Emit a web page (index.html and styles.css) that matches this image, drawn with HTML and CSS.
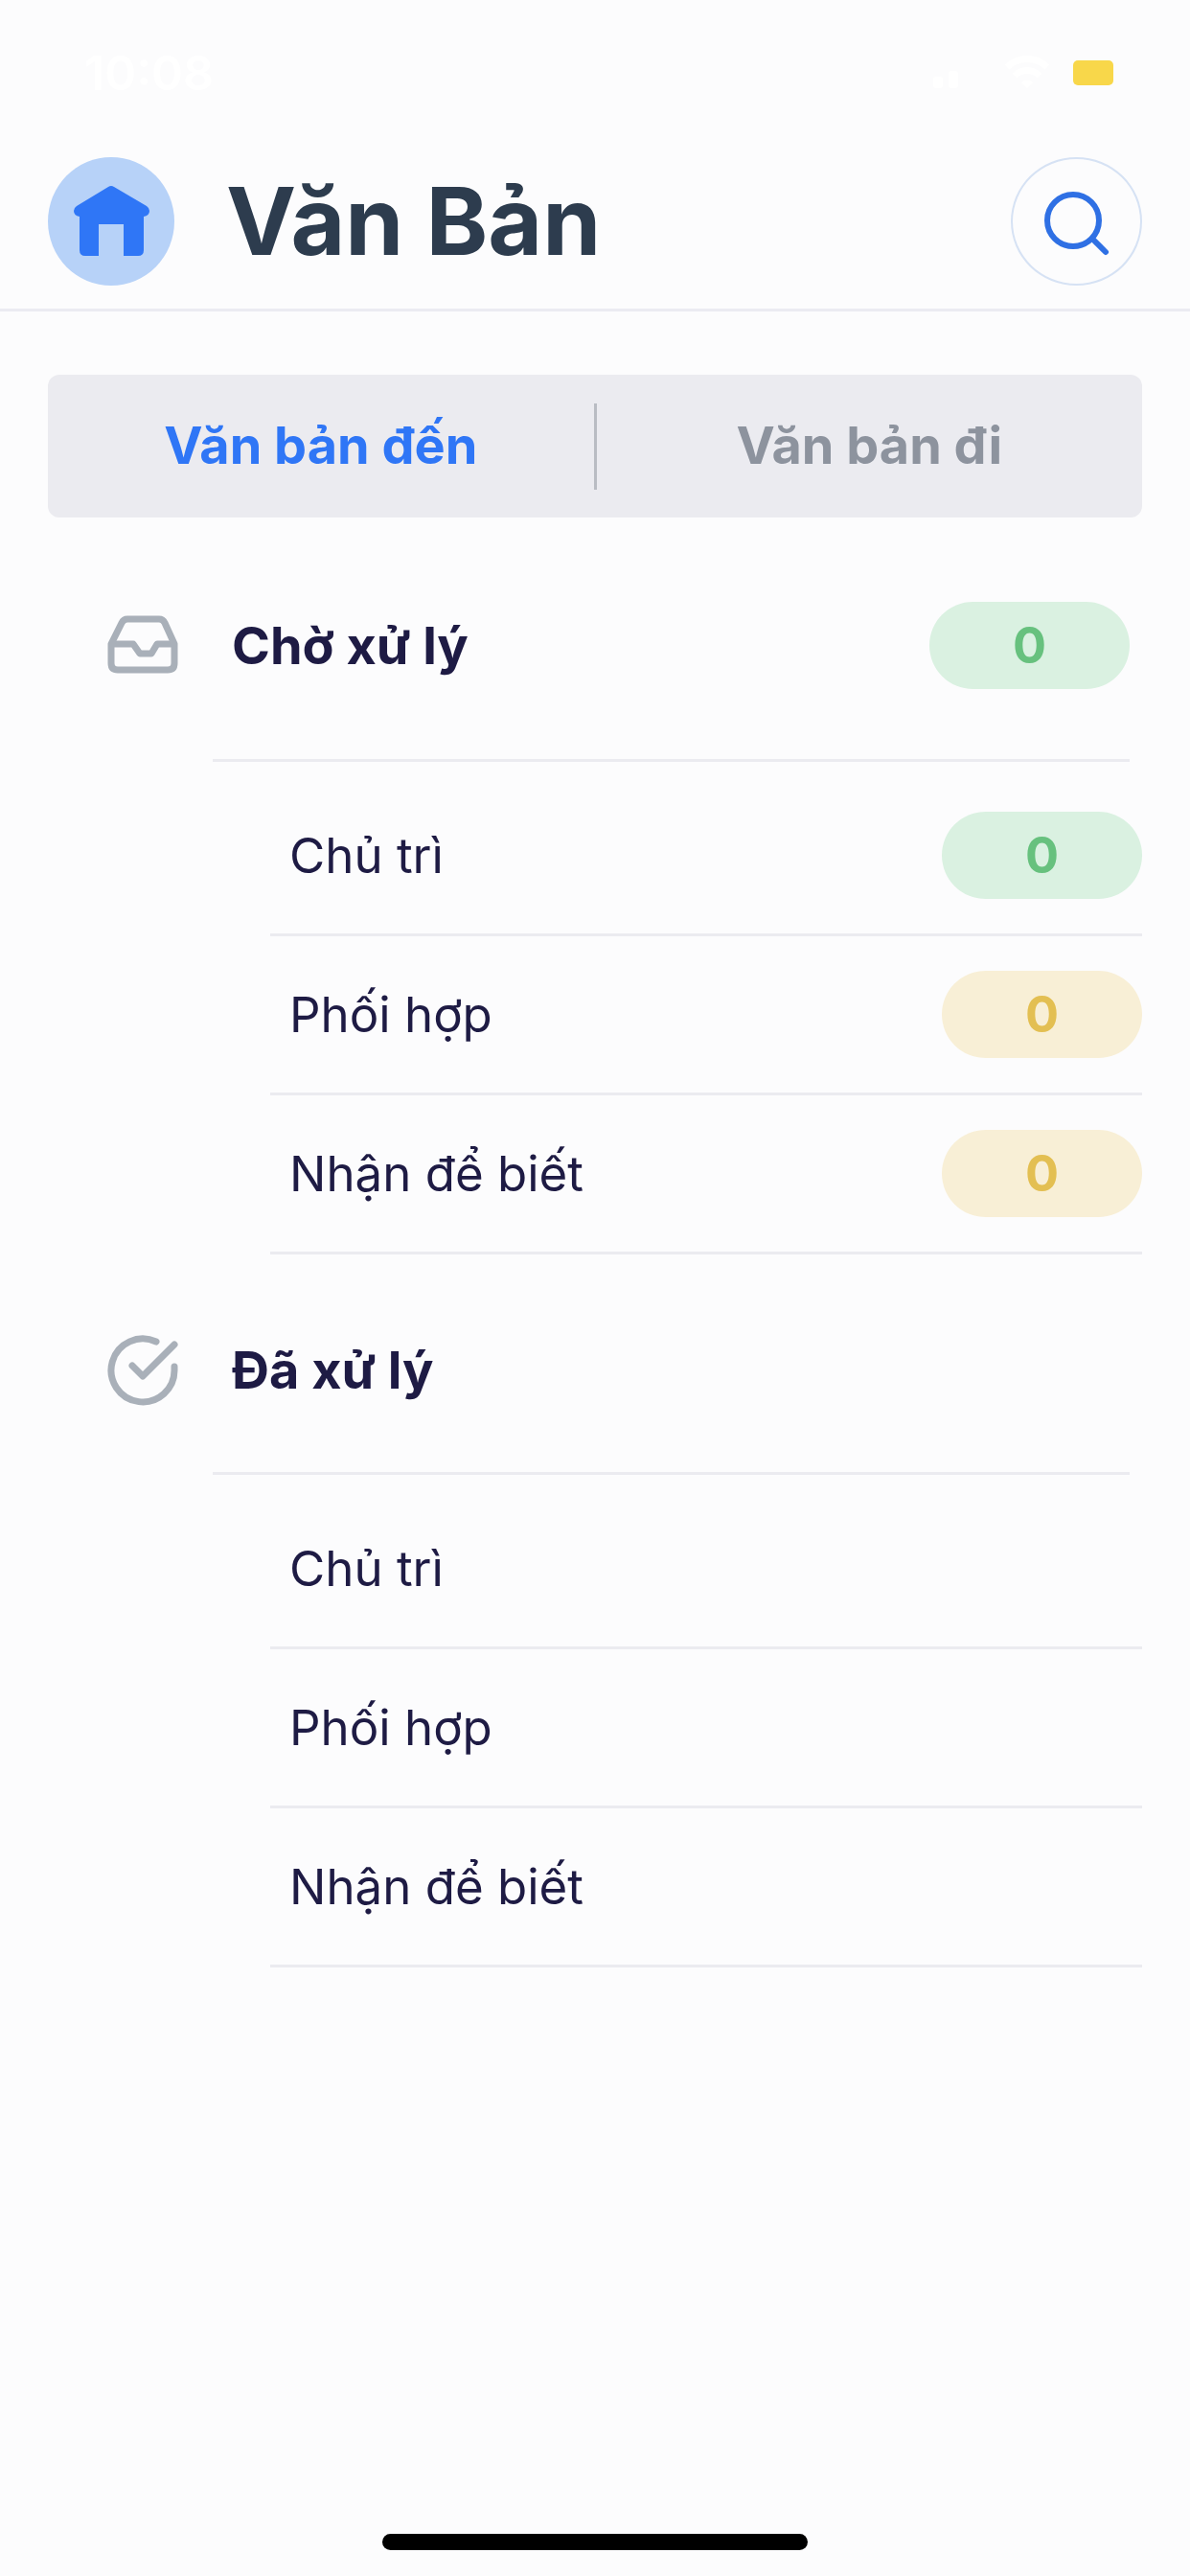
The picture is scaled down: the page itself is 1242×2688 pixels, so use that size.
FILE: index.html
```html
<!DOCTYPE html>
<html lang="vi">
<head>
  <meta charset="UTF-8">
  <title>Văn Bản</title>
  <meta name="viewport" content="width=device-width, initial-scale=1.0">
  <link rel="stylesheet" href="styles.css">
</head>
<body>
  <div class="status-bar">
    <span class="time">10:08</span>
    <div class="status-icons">
      <svg class="signal" width="54" height="36" viewBox="0 0 54 36" fill="#fff">
        <rect x="4" y="22" width="10" height="12" rx="3"/>
        <rect x="20" y="16" width="10" height="18" rx="3"/>
      </svg>
      <svg class="wifi" width="48" height="36" viewBox="0 0 48 36" fill="none" stroke="#fff" stroke-width="7">
        <path d="M3 12a30 30 0 0 1 42 0M11 21a18 18 0 0 1 26 0"/>
        <path d="M24 34l-6-6a9 9 0 0 1 12 0z" fill="#fff" stroke="none"/>
      </svg>
      <span class="battery"></span>
    </div>
  </div>

  <header class="header">
    <a class="home" href="#" aria-label="Trang chủ">
      <svg width="80" height="74" viewBox="0 0 80 74" fill="#2f76f6">
        <path d="M37 1q3-2 6 0l34 20q3 2 3 5 0 5-6 6v35q0 6-6 6H53V40H27v33H13q-6 0-6-6V32q-6-1-6-6 0-3 3-5z"/>
      </svg>
    </a>
    <h1 class="title">Văn Bản</h1>
    <button class="search" type="button" aria-label="Tìm kiếm">
      <svg width="68" height="72" viewBox="0 0 68 72" fill="none" stroke="#2f70e4" stroke-width="6" stroke-linecap="round">
        <circle cx="30" cy="35" r="27"/>
        <path d="M50 54l14 14"/>
      </svg>
    </button>
  </header>

  <main class="content">
    <nav class="tabs">
      <button class="tab active" type="button">Văn bản đến</button>
      <button class="tab" type="button">Văn bản đi</button>
    </nav>

    <section class="group">
      <div class="group-header">
        <svg class="group-icon" width="74" height="74" viewBox="0 0 74 74" fill="none" stroke="#a9b0b9" stroke-width="7" stroke-linejoin="round">
          <path d="M4 35h23l7 10h12l6-10h19"/>
          <path d="M15 13L4 35v20q0 7 7 7h52q7 0 7-7V35L60 13q-2-4-6-4H21q-4 0-6 4z"/>
        </svg>
        <h2 class="group-title">Chờ xử lý</h2>
        <span class="badge green">0</span>
      </div>
      <ul class="rows">
        <li class="row"><a href="#">Chủ trì</a><span class="badge green">0</span></li>
        <li class="row"><a href="#">Phối hợp</a><span class="badge yellow">0</span></li>
        <li class="row"><a href="#">Nhận để biết</a><span class="badge yellow">0</span></li>
      </ul>
    </section>

    <section class="group">
      <div class="group-header">
        <svg class="group-icon" width="74" height="74" viewBox="0 0 74 74" fill="none" stroke="#a9b0b9" stroke-width="7" stroke-linejoin="round" stroke-linecap="round">
          <path d="M70 33v3a33 33 0 1 1-19-29"/>
          <path d="M70 10L37 43 26 32"/>
        </svg>
        <h2 class="group-title">Đã xử lý</h2>
      </div>
      <ul class="rows">
        <li class="row"><a href="#">Chủ trì</a></li>
        <li class="row"><a href="#">Phối hợp</a></li>
        <li class="row"><a href="#">Nhận để biết</a></li>
      </ul>
    </section>
  </main>

  <div class="home-indicator"></div>
</body>
</html>
```
FILE: styles.css
```css
* {
  box-sizing: border-box;
}

body {
  margin: 0;
  min-height: 100vh;
  display: flex;
  flex-direction: column;
  font-family: Inter, "Liberation Sans", sans-serif;
  background-color: #fcfcfd;
  color: #1e1b44;
}

button {
  padding: 0;
  border: none;
  background: none;
  font-family: inherit;
}

a {
  color: inherit;
  text-decoration: none;
}

svg {
  display: block;
}

.status-bar {
  display: flex;
  justify-content: space-between;
  align-items: center;
  height: 152px;
  padding: 0 80px 0 88px;
}

.time {
  font-size: 50px;
  font-weight: 600;
  color: #fff;
}

.status-icons {
  display: flex;
  align-items: center;
  gap: 24px;
}

.battery {
  width: 42px;
  height: 26px;
  border-radius: 5px;
  background-color: #f8d74a;
}

.header {
  display: flex;
  align-items: center;
  padding: 12px 50px 24px;
  border-bottom: 3px solid #ebebf2;
}

.home,
.search {
  display: flex;
  justify-content: center;
  align-items: center;
  height: 134px;
  border-radius: 50%;
}

.home {
  width: 132px;
  background-color: #b7d2f8;
}

.search {
  width: 137px;
  border: 2px solid #d6e2f4;
}

.title {
  flex: 1;
  margin: 0 0 0 54px;
  font-size: 98px;
  line-height: 134px;
  font-weight: 700;
  color: #2d3c4e;
}

.content {
  flex: 1;
  padding: 66px 50px 0;
}

.tabs {
  display: flex;
  align-items: center;
  height: 149px;
  border-radius: 12px;
  background-color: #ebebf0;
}

.tab {
  flex: 1;
  height: 90px;
  padding-bottom: 2px;
  font-size: 54px;
  font-weight: 700;
  color: #8d939e;
}

.tab.active {
  color: #2f76f6;
}

.tab + .tab {
  border-left: 3px solid #b9bcc3;
}

.group-header {
  display: flex;
  align-items: center;
  margin: 0 13px 0 172px;
  padding: 88px 0 73px;
  border-bottom: 3px solid #ebebf0;
}

/* the icon hangs out to the left of the divider */
.group-icon {
  margin: -4px 0 -4px -110px;
}

.group-title {
  flex: 1;
  margin: 0 0 0 56px;
  font-size: 54px;
  line-height: 66px;
  font-weight: 700;
}

.badge {
  width: 209px;
  border-radius: 46px;
  font-size: 52px;
  line-height: 91px;
  font-weight: 700;
  text-align: center;
}

.green {
  background-color: #daf1e1;
  color: #67c17e;
}

.yellow {
  background-color: #f8efd6;
  color: #e3bf52;
}

.rows {
  margin: 0 0 0 232px;
  padding: 16px 0 0;
  list-style: none;
}

.row {
  display: flex;
  justify-content: space-between;
  align-items: center;
  height: 166px;
  padding-left: 20px;
  border-bottom: 3px solid #ebebf0;
  font-size: 51px;
}

.home-indicator {
  width: 444px;
  height: 17px;
  margin: 0 auto 27px;
  border-radius: 9px;
  background-color: #000;
}
```
